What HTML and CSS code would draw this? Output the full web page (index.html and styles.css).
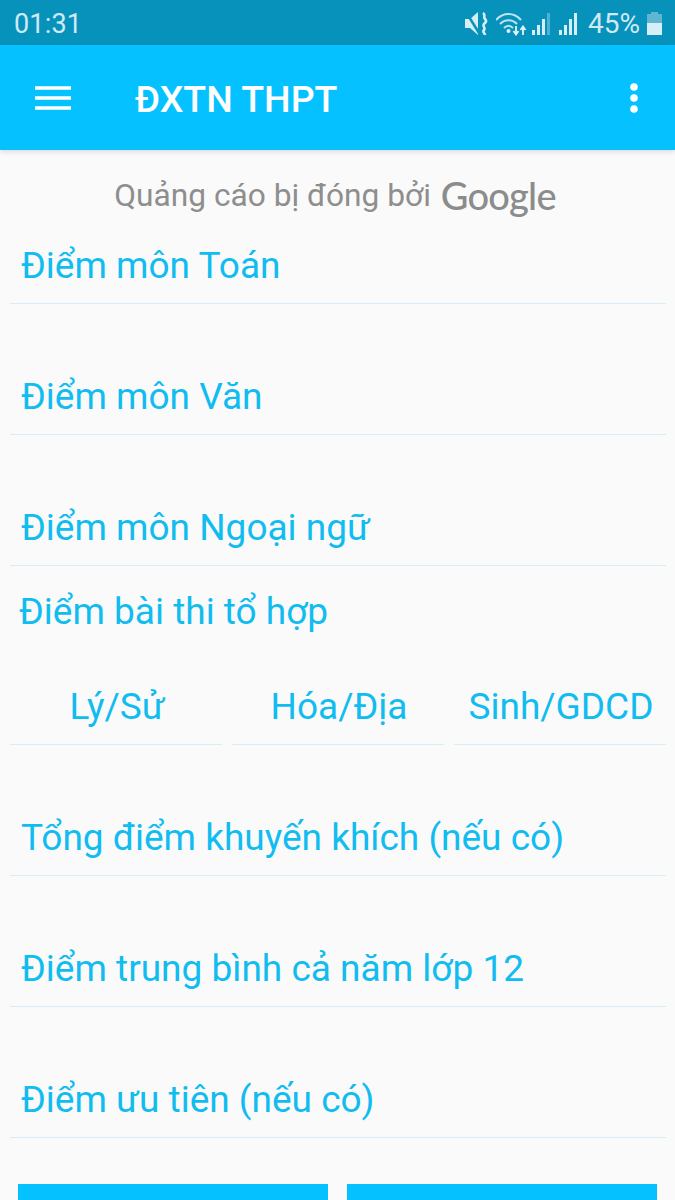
FILE: index.html
```html
<!DOCTYPE html>
<html lang="vi">
<head>
<meta charset="utf-8">
<title>ĐXTN THPT</title>
<link rel="stylesheet" href="styles.css">
</head>
<body>
<div class="page">
  <header class="status">
    <span class="time">01:31</span>
    <div class="status-right">
      <svg class="ico-mute" width="24" height="23" viewBox="0 0 24 23"><path d="M0 7h5l8-7v23l-8-7H0z" fill="#d6eef5"/><path d="M1 0l13 21" stroke="#0792bb" stroke-width="2.5"/><path d="M18 1c3 2 0 4 2 6s1 3-1 5 2 4 0 6 1 3 1 5" fill="none" stroke="#d6eef5" stroke-width="2.600"/></svg>
      <svg class="ico-wifi" width="31" height="24" viewBox="0 0 31 24"><g fill="none" stroke="#bfe3ef" stroke-width="2"><path d="M0 8C7 0 18 0 25 8"/><path d="M4 12c5-5 12-5 17 0"/><path d="M8 16c3-3 6-3 9 0"/></g><circle cx="12.500" cy="19" r="2" fill="#d6eef5"/><path d="M20 14v8M17.500 19l2.500 3.500 2.500-3.500" fill="none" stroke="#e2f3f8" stroke-width="1.800"/><path d="M27 23v-8M24.500 18l2.500-3.500 2.500 3.500" fill="none" stroke="#e2f3f8" stroke-width="1.800"/></svg>
      <svg class="ico-signal" width="18" height="22" viewBox="0 0 18 22"><rect x="0" y="17" width="3" height="5" fill="#d6eef5"/><rect x="5" y="12" width="3" height="10" fill="#d6eef5"/><rect x="10" y="6" width="3" height="16" fill="#d6eef5"/><rect x="15" y="0" width="3" height="22" fill="#4fb2d2"/></svg>
      <svg class="ico-signal sim2" width="18" height="22" viewBox="0 0 18 22"><rect x="0" y="17" width="3" height="5" fill="#d6eef5"/><rect x="5" y="12" width="3" height="10" fill="#d6eef5"/><rect x="10" y="6" width="3" height="16" fill="#d6eef5"/><rect x="15" y="0" width="3" height="22" fill="#d6eef5"/></svg>
      <span class="pct">45%</span>
      <svg class="ico-batt" width="15" height="23" viewBox="0 0 15 23"><path d="M4 0h7v2h4v21H0V2h4z" fill="#62b5d2"/><path d="M0 11h15v12H0z" fill="#d6eef5"/></svg>
    </div>
  </header>
  <div class="appbar">
    <svg class="menu" width="36" height="24" viewBox="0 0 36 24"><path d="M0 2h36M0 12h36M0 22h36" stroke="#fff" stroke-width="3.400"/></svg>
    <h1 class="title">ĐXTN THPT</h1>
    <svg class="more" width="10" height="30" viewBox="0 0 10 30"><circle cx="5" cy="4" r="3.800" fill="#fff"/><circle cx="5" cy="15" r="3.800" fill="#fff"/><circle cx="5" cy="26" r="3.800" fill="#fff"/></svg>
  </div>
  <main class="content">
    <div class="ad"><span class="ad-text">Quảng cáo bị đóng bởi</span> <span class="google">Google</span></div>
    <div class="form">
      <div class="field">Điểm môn Toán</div>
      <div class="field spaced">Điểm môn Văn</div>
      <div class="field spaced">Điểm môn Ngoại ngữ</div>
      <div class="group-label">Điểm bài thi tổ hợp</div>
      <div class="triple">
        <div class="field center">Lý/Sử</div>
        <div class="field center">Hóa/Địa</div>
        <div class="field center">Sinh/GDCD</div>
      </div>
      <div class="field spaced">Tổng điểm khuyến khích (nếu có)</div>
      <div class="field spaced">Điểm trung bình cả năm lớp 12</div>
      <div class="field spaced">Điểm ưu tiên (nếu có)</div>
    </div>
    <div class="buttons">
      <div class="btn"></div>
      <div class="btn"></div>
    </div>
  </main>
</div>
</body>
</html>
```
FILE: styles.css
```css
html, body {
  margin: 0;
  padding: 0;
}
body {
  font-family: Roboto, "Noto Sans", sans-serif;
  background: #fafafa;
}
.page {
  width: 675px;
  height: 1200px;
  overflow: hidden;
  display: flex;
  flex-direction: column;
}
.status {
  height: 45px;
  flex: none;
  background: #0792bb;
  color: #cfeaf3;
  display: flex;
  align-items: center;
  justify-content: space-between;
  padding: 2px 13px 0 14px;
  box-sizing: border-box;
}
.time {
  font-size: 27px;
  letter-spacing: 0.2px;
}
.status-right {
  display: flex;
  align-items: center;
}
.ico-wifi {
  margin-left: 7px;
}
.ico-signal {
  margin-left: 5px;
}
.sim2 {
  margin-left: 9px;
}
.pct {
  font-size: 28px;
  margin-left: 11px;
}
.ico-batt {
  margin-left: 7px;
}
.appbar {
  height: 105px;
  flex: none;
  background: #06c1ff;
  display: flex;
  align-items: center;
  padding: 0 36px 0 35px;
  box-sizing: border-box;
  box-shadow: 0 2px 5px rgba(0, 0, 0, 0.12);
  position: relative;
}
.title {
  margin: 2px 0 0 64px;
  flex: 1;
  color: #fff;
  font-size: 37.500px;
  font-weight: 500;
}
.content {
  flex: 1;
}
.ad {
  height: 91px;
  display: flex;
  align-items: center;
  justify-content: center;
  gap: 10px;
  color: #8e8e8e;
  box-sizing: border-box;
  padding: 0 5px 1px 0;
}
.ad-text {
  font-size: 31.700px;
}
.google {
  font-family: Lato, sans-serif;
  font-size: 38px;
  font-weight: 500;
  letter-spacing: -0.8px;
  color: #8c8c8c;
}
.form {
  padding: 0 9px 0 10px;
}
.field {
  color: #10bcf0;
  font-size: 37px;
  line-height: 49px;
  padding: 0 11px 13px;
  border-bottom: 1px solid #d5eef8;
}
.spaced {
  margin-top: 68px;
}
.group-label {
  color: #10bcf0;
  font-size: 37px;
  line-height: 49px;
  margin: 21px 0 46px 9px;
}
.triple {
  display: grid;
  grid-template-columns: repeat(3, 212px);
  gap: 10px;
}
.center {
  text-align: center;
  padding-left: 2px;
  padding-right: 0;
}
.buttons {
  display: flex;
  gap: 19px;
  padding: 46px 18px 0 18px;
}
.btn {
  width: 310px;
  height: 60px;
  background: #06c1ff;
}
```
